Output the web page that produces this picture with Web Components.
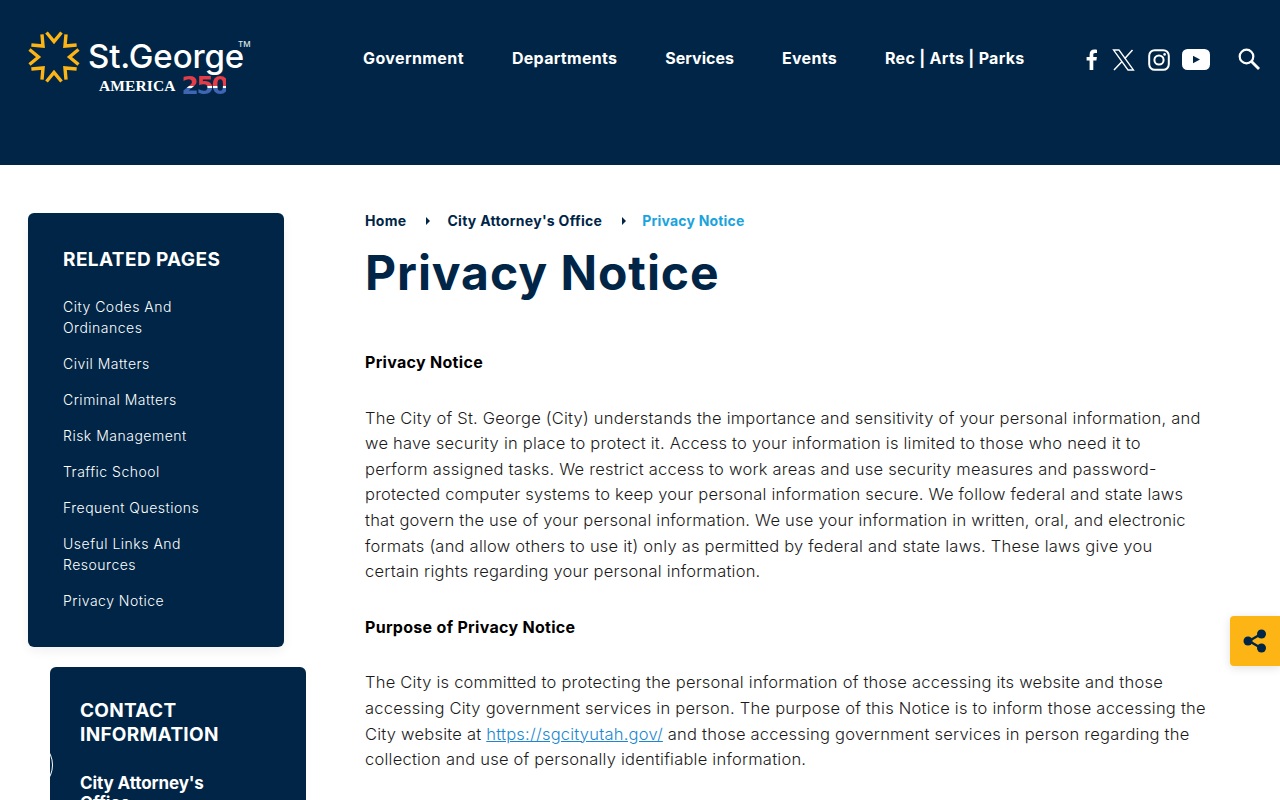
<!DOCTYPE html>
<html lang="en">
<head>
<meta charset="utf-8">
<title>Privacy Notice</title>
<style>
  html, body { margin: 0; height: 800px; overflow: hidden; background: #fff; }
  body { font-family: Inter, "Liberation Sans", sans-serif; }
</style>
</head>
<body>
<site-header></site-header>
<page-layout>
  <div slot="side">
    <related-pages></related-pages>
    <contact-card></contact-card>
  </div>
  <privacy-article></privacy-article>
</page-layout>
<share-tab></share-tab>

<script>
// Top bar: logo, main nav, social icons, search
class SiteHeader extends HTMLElement {
  constructor() {
    super();
    this.attachShadow({ mode: "open" });
  }
  connectedCallback() {
    const nav = ["Government", "Departments", "Services", "Events", "Rec | Arts | Parks"];
    const rays = [0, 45, 90, 135, 180, 225, 270, 315]
      .map(a => `<path transform="rotate(${a} 26 26)" d="M18.500 1.500 L26 10.500 L33.500 1.500" fill="none" stroke="#fdb515" stroke-width="3.400"/>`).join("");
    this.shadowRoot.innerHTML = `
      <style>
        :host { display: flex; align-items: flex-start; height: 165px; background: #002546; color: #fff; box-sizing: border-box; }
        .logo { width: 363px; padding: 31px 0 0 28px; box-sizing: border-box; display: flex; flex: none; }
        .logo svg.sun { width: 52px; height: 52px; flex: none; overflow: visible; }
        .word { margin-left: 8px; position: relative; }
        .name { font-size: 33px; font-weight: 500; line-height: 36px; margin-top: 7px; letter-spacing: -0.1px; white-space: nowrap; }
        .tm { position: absolute; left: 150px; top: 8px; font-size: 8px; font-weight: 500; color: #dfe5ea; }
        .am { display: flex; align-items: center; margin: 0 0 0 11px; font: bold 15.500px "Liberation Serif", serif; height: 24px; white-space: nowrap; letter-spacing: 0.1px; }
        .n250 { margin-left: 6px; font: bold 25px/24px "DejaVu Sans", sans-serif; letter-spacing: -2.400px; color: transparent; background: linear-gradient(#e23d48 0 50%, #fff 50% 60%, #3f66b3 60%); -webkit-background-clip: text; background-clip: text; }
        nav { display: flex; gap: 48px; padding-top: 48px; font-size: 16px; font-weight: 700; line-height: 20px; white-space: nowrap; flex: none; letter-spacing: 0.3px; }
        nav span:first-child { letter-spacing: .4px; }
        nav span:nth-child(3) { letter-spacing: 0; }
        .tools { display: flex; align-items: center; position: relative; margin-left: auto; padding: 48px 19px 0 0; }
        .tools > svg { margin-top: -1px; }
        svg { display: block; }
        .soc { display: flex; align-items: center; }
      </style>
      <div class="logo">
        <svg class="sun" viewBox="0 0 52 52">${rays}</svg>
        <div class="word">
          <div class="name">St.George</div>
          <span class="tm">TM</span>
          <div class="am">AMERICA<span class="n250">250</span></div>
        </div>
      </div>
      <nav>${nav.map(n => `<span>${n}</span>`).join("")}</nav>
      <div class="tools">
        <div class="soc">
          <svg width="12" height="21" viewBox="0 0 12 21" style="margin-right:14px;margin-left:1px"><path fill="#fff" d="M3.600 21V11.600H.6V8h3V5.400C3.600 2.200 5.500.6 8.200.6c1.300 0 2.400.1 2.800.2v3.200H9.100C7.600 4 7.300 4.700 7.300 5.800V8h3.600l-.5 3.600H7.300V21z"/></svg>
          <svg width="23" height="22" viewBox="0 0 23 22" style="margin-right:13px"><path fill="none" stroke="#fff" stroke-width="1.300" d="M1.500 1h5.500l14.500 20h-5.500z"/><path fill="none" stroke="#fff" stroke-width="1.500" d="M20.500 1L12.800 9.600M9.800 12.700L2 21"/></svg>
          <svg width="22" height="22" viewBox="0 0 22 22" style="margin-right:12px"><rect x="1.200" y="1.200" width="19.600" height="19.600" rx="5.500" fill="none" stroke="#fff" stroke-width="2"/><circle cx="11" cy="11" r="4.600" fill="none" stroke="#fff" stroke-width="2"/><circle cx="16.600" cy="5.400" r="1.300" fill="#fff"/></svg>
          <svg width="28" height="21" viewBox="0 0 28 21" style="margin-right:27px"><rect width="28" height="21" rx="5.500" fill="#fff"/><path fill="#002546" d="M11 6.700l7 3.800-7 3.800z"/></svg>
        </div>
        <svg width="24" height="24" viewBox="0 0 24 24"><circle cx="9.500" cy="9.500" r="6.800" fill="none" stroke="#fff" stroke-width="2.200"/><path d="M14.500 14.500l7.500 7.500" stroke="#fff" stroke-width="2.800" fill="none"/></svg>
      </div>
    `;
  }
}

// Two column frame under the header
class PageLayout extends HTMLElement {
  constructor() {
    super();
    this.attachShadow({ mode: "open" });
    this.shadowRoot.innerHTML = `
      <style>
        :host { display: grid; grid-template-columns: 278px 1fr; column-gap: 59px; padding: 48px 0 0 28px; }
        .main { min-width: 0; }
      </style>
      <div class="side"><slot name="side"></slot></div>
      <div class="main"><slot></slot></div>
    `;
  }
}

class RelatedPages extends HTMLElement {
  constructor() {
    super();
    this.attachShadow({ mode: "open" });
  }
  connectedCallback() {
    const links = ["City Codes And<br>Ordinances", "Civil Matters", "Criminal Matters", "Risk Management", "Traffic School", "Frequent Questions", "Useful Links And<br>Resources", "Privacy Notice"];
    this.shadowRoot.innerHTML = `
      <style>
        :host { display: block; width: 256px; box-sizing: border-box; background: #002546; color: #fff; border-radius: 6px; padding: 36px 20px 36px 35px; box-shadow: 0 4px 12px rgba(0,0,0,.06); }
        h2 { margin: 0 0 25px; font-size: 19px; line-height: 22px; font-weight: 700; letter-spacing: .4px; }
        div { font-size: 14px; line-height: 21px; font-weight: 300; margin-top: 15px; color: #fff; letter-spacing: .5px; }
        h2 + div { margin-top: 0; }
      </style>
      <h2>RELATED PAGES</h2>
      ${links.map(l => `<div>${l}</div>`).join("")}
    `;
  }
}

class ContactCard extends HTMLElement {
  constructor() {
    super();
    this.attachShadow({ mode: "open" });
    this.shadowRoot.innerHTML = `
      <style>
        :host { display: block; position: relative; width: 256px; height: 240px; margin: 20px 0 0 22px; box-sizing: border-box; background: #002546; color: #fff; border-radius: 6px 6px 0 0; padding: 32px 20px 0 30px; }
        h2 { margin: 0 0 26px; font-size: 19px; line-height: 24px; font-weight: 700; letter-spacing: .3px; }
        h3 { margin: 0; font-size: 17px; line-height: 20px; font-weight: 700; letter-spacing: -.1px; }
        .ring { position: absolute; left: -51px; top: 71px; width: 54px; height: 54px; box-sizing: border-box; border: 1.500px solid #fff; border-radius: 50%; }
      </style>
      <span class="ring"></span>
      <h2>CONTACT<br>INFORMATION</h2>
      <h3>City Attorney's<br>Office</h3>
    `;
  }
}

class PrivacyArticle extends HTMLElement {
  constructor() {
    super();
    this.attachShadow({ mode: "open" });
    this.shadowRoot.innerHTML = `
      <style>
        :host { display: block; width: 850px; color: #1a1a1a; }
        .crumbs { display: flex; align-items: center; font-size: 14px; line-height: 16px; font-weight: 700; color: #002546; white-space: nowrap; letter-spacing: .3px; }
        .crumbs i { width: 0; height: 0; border-left: 4px solid #002546; border-top: 4px solid transparent; border-bottom: 4px solid transparent; margin: 0 17px 0 20px; }
        .crumbs b { color: #1ba3dd; font-weight: 700; margin-left: -1px; letter-spacing: .2px; }
        h1 { margin: 14px 0 0; font-size: 48px; line-height: 60px; font-weight: 700; color: #002546; letter-spacing: .95px; white-space: nowrap; }
        h4 { margin: 0; font-size: 16px; line-height: 26px; font-weight: 700; color: #000; letter-spacing: .3px; }
        p { margin: 30.600px 0 29px; font-size: 16.500px; line-height: 25.600px; font-weight: 300; white-space: nowrap; letter-spacing: .23px; }
        a { color: #1b87d0; }
        .first { margin-top: 46px; }
      </style>
      <div class="crumbs"><span>Home</span><i></i><span>City Attorney's Office</span><i></i><b>Privacy Notice</b></div>
      <h1>Privacy Notice</h1>
      <h4 class="first">Privacy Notice</h4>
      <p>The City of St. George (City) understands the importance and sensitivity of your personal information, and<br>we have security in place to protect it. Access to your information is limited to those who need it to<br>perform assigned tasks. We restrict access to work areas and use security measures and password-<br>protected computer systems to keep your personal information secure. We follow federal and state laws<br>that govern the use of your personal information. We use your information in written, oral, and electronic<br>formats (and allow others to use it) only as permitted by federal and state laws. These laws give you<br>certain rights regarding your personal information.</p>
      <h4>Purpose of Privacy Notice</h4>
      <p>The City is committed to protecting the personal information of those accessing its website and those<br>accessing City government services in person. The purpose of this Notice is to inform those accessing the<br>City website at <a href="#">https://sgcityutah.gov/</a> and those accessing government services in person regarding the<br>collection and use of personally identifiable information.</p>
    `;
  }
}

// Floating share button on the right edge
class ShareTab extends HTMLElement {
  constructor() {
    super();
    this.attachShadow({ mode: "open" });
    this.shadowRoot.innerHTML = `
      <style>
        :host { position: fixed; right: 0; top: 616px; width: 50px; height: 50px; display: flex; align-items: center; justify-content: center; background: #fdb515; border-radius: 4px 0 0 4px; box-shadow: 0 2px 10px rgba(0,0,0,.12); }
        svg { margin-top: -1px; }
      </style>
      <svg width="24" height="24" viewBox="0 0 24 24"><path d="M18 5L6 12l12 7" fill="none" stroke="#002546" stroke-width="2.400"/><circle cx="18.500" cy="5" r="4.500" fill="#002546"/><circle cx="18.500" cy="19" r="4.500" fill="#002546"/><circle cx="5" cy="12" r="4.500" fill="#002546"/></svg>
    `;
  }
}

customElements.define("site-header", SiteHeader);
customElements.define("page-layout", PageLayout);
customElements.define("related-pages", RelatedPages);
customElements.define("contact-card", ContactCard);
customElements.define("privacy-article", PrivacyArticle);
customElements.define("share-tab", ShareTab);
</script>
</body>
</html>
